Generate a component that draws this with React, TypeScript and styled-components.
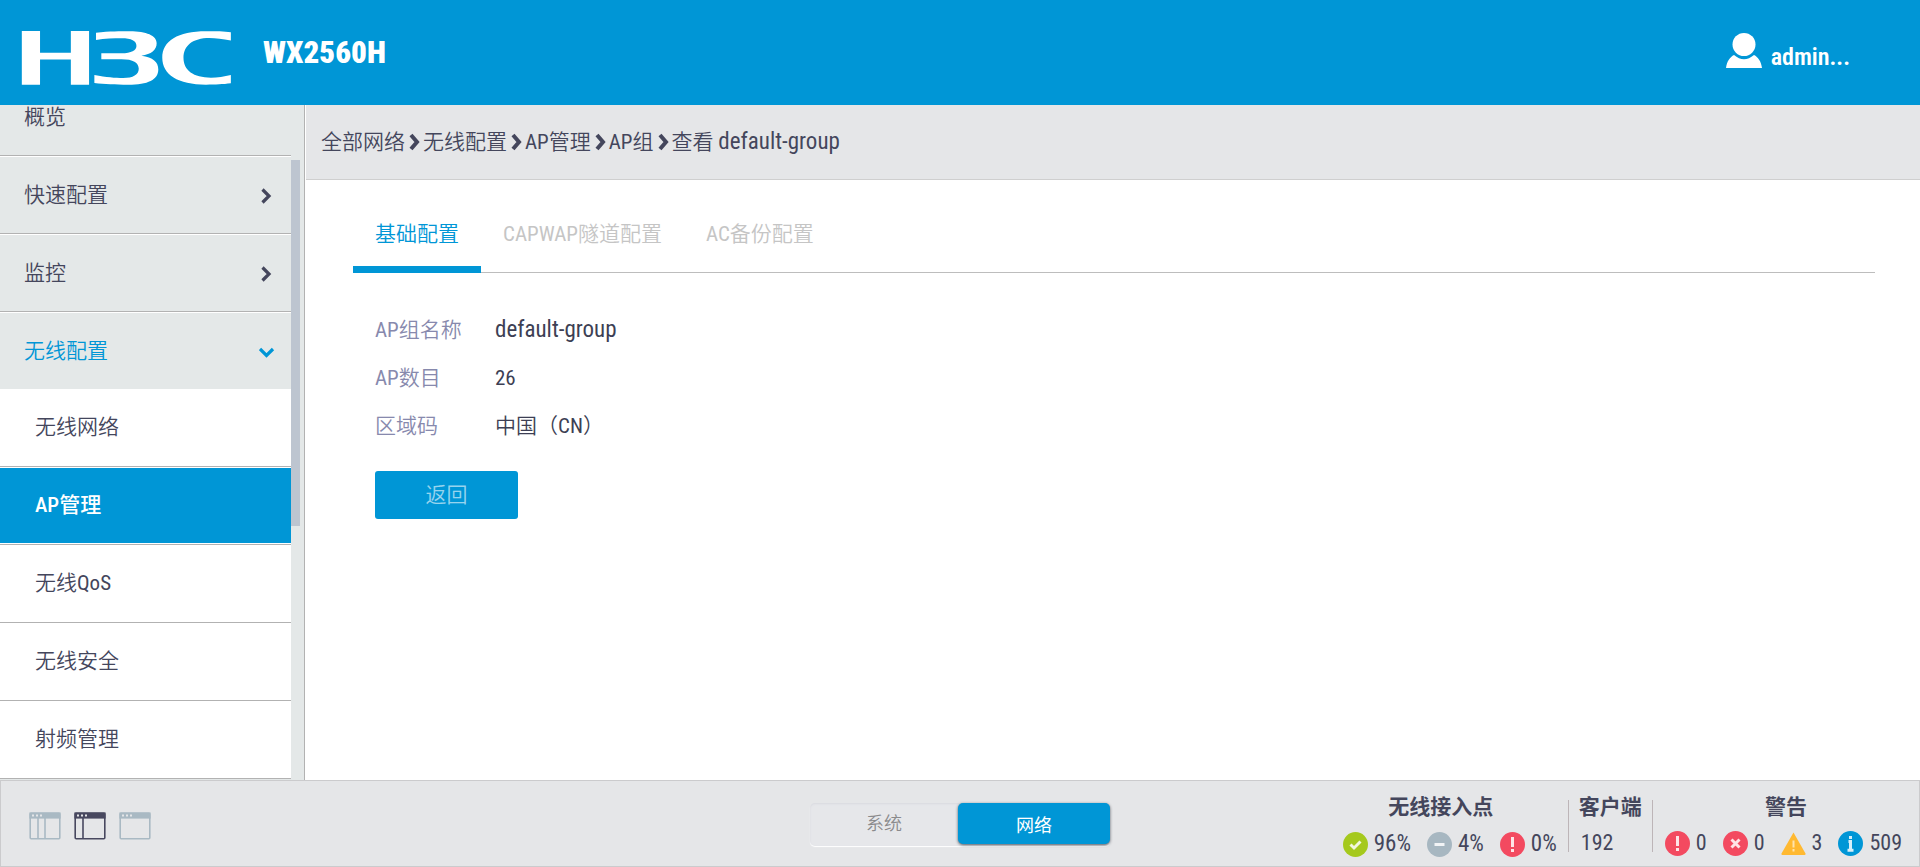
import React from "react";
import styled, { createGlobalStyle, css } from "styled-components";

const blue = "#0096d6";
const ink = "#44465c";
const line = "#b2b2b2";

const GlobalStyle = createGlobalStyle`
  *, *::before, *::after { box-sizing: border-box; }
  body {
    margin: 0;
    color: ${ink};
    background: #fff;
    font-family: "Roboto Condensed", "Noto Sans CJK SC DemiLight", "Noto Sans CJK SC", sans-serif;
    font-size: 21px;
    line-height: 30px;
  }
  button { font: inherit; color: inherit; border: 0; padding: 0; background: none; cursor: pointer; }
  a { color: inherit; text-decoration: none; }
  ul, ol, dl, dd { margin: 0; padding: 0; list-style: none; }
  svg { display: block; flex: none; }
`;

const Page = styled.div`
  display: flex;
  flex-direction: column;
  height: 100vh;
`;

const Header = styled.header`
  display: flex;
  flex: none;
  align-items: center;
  height: 105px;
  padding: 0 70px 0 21px;
  background: ${blue};
  color: #fff;
`;

const LogoLink = styled.a`
  padding-top: 11px;
`;

const DeviceName = styled.span`
  flex: 1;
  margin-left: 31px;
  font-size: 31px;
  font-weight: 900;
`;

const UserButton = styled.button`
  display: flex;
  align-items: flex-end;
  gap: 9px;
  && { font-size: 24px; font-weight: 600; }
  svg { margin-bottom: 4px; }
`;

const Body = styled.div`
  display: flex;
  flex: 1;
  min-height: 0;
`;

const Sidebar = styled.nav`
  display: flex;
  flex: none;
  width: 305px;
  overflow: hidden;
  background: #e4e8e8;
  border-right: 1px solid ${line};
`;

const Menu = styled.ul`
  flex: 1;
  margin-top: -27px;
`;

const MenuLink = styled.a<{ $open?: boolean }>`
  display: flex;
  align-items: center;
  justify-content: space-between;
  height: 78px;
  padding: 0 16px 0 24px;
  border-top: 1px solid #fff;
  border-bottom: 1px solid ${line};
  ${(p) => p.$open && css`
    height: 77px;
    color: ${blue};
    border-bottom: 0;
  `}
`;

const SubLink = styled.a<{ $current?: boolean }>`
  display: flex;
  align-items: center;
  height: 78px;
  padding: 0 0 2px 35px;
  background: #fff;
  border-bottom: 1px solid ${line};
  ${(p) => p.$current && css`
    color: #fff;
    font-family: "Roboto Condensed", "Noto Sans CJK SC", sans-serif;
    font-weight: 500;
    background: ${blue};
    background-clip: padding-box;
    box-shadow: inset 0 1px #fff, inset 0 -1px #fff;
  `}
`;

const ScrollTrack = styled.div`
  flex: none;
  width: 13px;
`;

const ScrollThumb = styled.div`
  width: 9px;
  height: 366px;
  margin-top: 55px;
  background: #bdc5d0;
`;

const Main = styled.main`
  flex: 1;
  min-width: 0;
  padding-left: 1px;
`;

const Breadcrumb = styled.ol`
  display: flex;
  align-items: center;
  height: 75px;
  padding: 0 15px;
  background: #e5e6e8;
  border-bottom: 1px solid #cfcfcf;
`;

const Crumb = styled.li`
  display: flex;
  align-items: center;
  white-space: pre;
  svg { margin: 0 3px 0 4px; }
`;

const GroupName = styled.span`
  font-size: 23px;
`;

const Content = styled.section`
  padding: 17px 45px 0 47px;
`;

const TabList = styled.div`
  display: flex;
  height: 76px;
  border-bottom: 1px solid #bdbdbd;
`;

const Tab = styled.button<{ $active?: boolean }>`
  height: 76px;
  && { padding: 4px 22px 0; color: ${(p) => (p.$active ? blue : "#c5c5c5")}; }
  border-bottom: 7px solid ${(p) => (p.$active ? blue : "transparent")};
`;

const Details = styled.dl`
  display: grid;
  grid-template-columns: 120px 1fr;
  grid-auto-rows: 48px;
  align-items: center;
  padding: 33px 22px 0;
`;

const Label = styled.dt`
  color: #8789ad;
`;

const Value = styled.dd`
  color: #3d3f54;
`;

const BackButton = styled.button`
  width: 143px;
  height: 48px;
  margin: 21px 22px 0;
  && { color: rgba(255, 255, 255, 0.6); background: ${blue}; }
  border-radius: 3px;
`;

const Footer = styled.footer`
  display: grid;
  flex: none;
  grid-template-columns: 1fr 300px 1fr;
  height: 87px;
  background: #e5e6e8;
  border: 1px solid #cbcbcd;
`;

const LayoutPicker = styled.div`
  display: flex;
  align-items: center;
  gap: 13px;
  padding: 5px 0 0 28px;
`;

const ModeSwitch = styled.div`
  display: flex;
  align-self: start;
  height: 43px;
  margin-top: 22px;
  border-radius: 5px;
  background: #e6e7ea;
  box-shadow: inset 0 1px 2px #d8d9df, 0 1px 1px #fff;
`;

const Mode = styled.button<{ $active?: boolean }>`
  flex: 1;
  height: 41px;
  && { font-size: 18px; color: #8a8a8c; }
  ${(p) => p.$active && css`
    flex: none;
    width: 152px;
    && {
      color: #fff;
      background: ${blue};
      font-family: "Noto Sans CJK SC", sans-serif;
    }
    border-radius: 5px;
    box-shadow: 0 1px 3px rgba(40, 50, 60, 0.8);
  `}
`;

const Stats = styled.div`
  display: flex;
  justify-content: flex-end;
`;

const Stat = styled.section<{ $wide?: boolean }>`
  min-width: ${(p) => (p.$wide ? "254px" : "0")};
  padding-top: 8px;
`;

const StatTitle = styled.h2`
  margin: 0;
  padding: 0 10px;
  font-family: "Noto Sans CJK SC", sans-serif;
  font-size: 21px;
  font-weight: 700;
  line-height: 32px;
  text-align: center;
`;

const StatItems = styled.ul<{ $end?: boolean }>`
  display: flex;
  justify-content: ${(p) => (p.$end ? "flex-end" : "flex-start")};
  gap: 16px;
  padding: ${(p) => (p.$end ? "7px 11px 0" : "6px 17px 0 12px")};
  font-size: ${(p) => (p.$end ? "23px" : "22px")};
`;

const StatItem = styled.li`
  display: flex;
  align-items: center;
  gap: 6px;
  line-height: 32px;
`;

const Divider = styled.div`
  width: 1px;
  height: 52px;
  margin-top: 19px;
  background: #bdb5b8;
`;

function Chevron({ down }: { down?: boolean }) {
  return (
    <svg width="16" height="18" viewBox="0 0 16 18" fill="none" stroke="currentColor" strokeWidth="3.2" aria-hidden="true">
      <path d={down ? "M1 7l6.500 6.500L14 7" : "M3.500 3.500l6.500 6.500-6.500 6.500"} />
    </svg>
  );
}

function CrumbArrow() {
  return (
    <svg width="11" height="18" viewBox="0 0 11 18" fill="none" stroke="currentColor" strokeWidth="4" aria-hidden="true">
      <path d="M2 2l6 7-6 7" />
    </svg>
  );
}

function Logo() {
  return (
    <svg width="211" height="54" viewBox="4 18 632 163" fill="#fff" role="img" aria-label="H3C">
      <path d="M4 18h55v66h93V18h55v162h-55v-76H59v76H4z" />
      <path d="M228 23C270 19 300 19 330 19C380 19 411 32 411 55C411 75 395 88 365 93C400 98 416 112 416 134C416 165 385 180 325 180C285 180 255 179 223 175V151C260 158 285 160 310 160C340 160 357 150 357 132C357 113 340 103 305 103H244V85H305C335 85 350 76 350 63C350 48 335 40 305 40C280 40 255 41 228 45Z" />
      <path d="M635 22V47C610 42 590 39 570 39C520 39 492 62 492 99C492 137 522 159 575 159C595 159 615 156 635 151V176C610 179 590 180 560 180C475 180 428 150 428 99C428 48 475 19 560 19C590 19 615 19 635 22Z" />
    </svg>
  );
}

function UserIcon() {
  return (
    <svg width="36" height="35" viewBox="0 0 36 35" fill="#fff" aria-hidden="true">
      <circle cx="18" cy="11.5" r="11.5" />
      <path d="M0 35C1 28 4 24 8 22Q18 30.500 28 22C32 24 35 28 36 35z" />
    </svg>
  );
}

function LayoutIcon({ bars, color }: { bars: number[]; color: string }) {
  return (
    <svg width="32" height="28" viewBox="0 0 32 28" fill="none" stroke={color} strokeWidth="1.6" aria-hidden="true">
      <rect x="1.200" y="1.200" width="29.600" height="25.600" rx="1" />
      <rect x="1.200" y="1.200" width="29.600" height="4.600" fill={color} />
      {bars.map((x) => <path key={x} d={`M${x} 6v21`} />)}
      <path d="M3 3.500h2M7 3.500h2M11 3.500h2" stroke="#e5e6e8" strokeWidth="2" />
    </svg>
  );
}

type Status = "ok" | "off" | "alert" | "error" | "warning" | "info";

const statusColor: Record<Status, string> = {
  ok: "#a5c91d", off: "#a7b7c1", alert: "#f34a60", error: "#f34a60", warning: "#ffb931", info: blue,
};

const statusMark: Record<Status, string> = {
  ok: "M7.500 12.500l3.500 3.500 6.500-6.500",
  off: "M7.500 12.500h10",
  alert: "M12.500 5v10M12.500 17v3",
  error: "M8.500 8.500l8 8M16.500 8.500l-8 8",
  warning: "M12.500 9.500v7M12.500 18v2.500",
  info: "M12.500 5v3M10.500 10.500h2V19M9.500 19.200h6",
};

function StatusIcon({ kind }: { kind: Status }) {
  return (
    <svg width="25" height="25" viewBox="0 0 25 25" aria-hidden="true">
      {kind === "warning"
        ? <path d="M12.500 1.500L24.500 22.500a1 1 0 0 1-1 1.500H1.500a1 1 0 0 1-1-1.500z" fill={statusColor[kind]} />
        : <circle cx="12.500" cy="12.500" r="12.500" fill={statusColor[kind]} />}
      <path
        d={statusMark[kind]}
        fill="none"
        stroke="#fff"
        strokeOpacity={kind === "warning" ? 0.6 : 0.85}
        strokeWidth={kind === "warning" ? 2 : 3}
      />
    </svg>
  );
}

const subItems = ["无线网络", "AP管理", "无线QoS", "无线安全", "射频管理"];
const crumbs = ["全部网络", "无线配置", "AP管理", "AP组"];
const apStats: [Status, string][] = [["ok", "96%"], ["off", "4%"], ["alert", "0%"]];
const alertStats: [Status, string][] = [["alert", "0"], ["error", "0"], ["warning", "3"], ["info", "509"]];

export default function App() {
  return (
    <Page>
      <GlobalStyle />
      <Header>
        <LogoLink href="#home"><Logo /></LogoLink>
        <DeviceName>WX2560H</DeviceName>
        <UserButton><UserIcon />admin...</UserButton>
      </Header>
      <Body>
        <Sidebar>
          <Menu>
            <li><MenuLink href="#overview">概览</MenuLink></li>
            <li><MenuLink href="#quick">快速配置<Chevron /></MenuLink></li>
            <li><MenuLink href="#monitor">监控<Chevron /></MenuLink></li>
            <li>
              <MenuLink href="#wireless" $open>无线配置<Chevron down /></MenuLink>
              <ul>
                {subItems.map((name) => (
                  <li key={name}><SubLink href={`#${name}`} $current={name === "AP管理"}>{name}</SubLink></li>
                ))}
              </ul>
            </li>
          </Menu>
          <ScrollTrack><ScrollThumb /></ScrollTrack>
        </Sidebar>
        <Main>
          <Breadcrumb>
            {crumbs.map((name) => <Crumb key={name}><a href={`#${name}`}>{name}</a><CrumbArrow /></Crumb>)}
            <Crumb>查看 <GroupName>default-group</GroupName></Crumb>
          </Breadcrumb>
          <Content>
            <TabList role="tablist">
              <Tab role="tab" aria-selected="true" $active>基础配置</Tab>
              <Tab role="tab">CAPWAP隧道配置</Tab>
              <Tab role="tab">AC备份配置</Tab>
            </TabList>
            <Details>
              <Label>AP组名称</Label>
              <Value><GroupName>default-group</GroupName></Value>
              <Label>AP数目</Label>
              <Value>26</Value>
              <Label>区域码</Label>
              <Value>中国（CN）</Value>
            </Details>
            <BackButton>返回</BackButton>
          </Content>
        </Main>
      </Body>
      <Footer>
        <LayoutPicker>
          <button aria-label="三栏布局"><LayoutIcon bars={[9, 16]} color="#a9b9c3" /></button>
          <button aria-label="两栏布局"><LayoutIcon bars={[9]} color="#48485f" /></button>
          <button aria-label="单栏布局"><LayoutIcon bars={[]} color="#a9b9c3" /></button>
        </LayoutPicker>
        <ModeSwitch>
          <Mode>系统</Mode>
          <Mode $active>网络</Mode>
        </ModeSwitch>
        <Stats>
          <Stat $wide>
            <StatTitle>无线接入点</StatTitle>
            <StatItems $end>
              {apStats.map(([kind, text]) => <StatItem key={kind}><StatusIcon kind={kind} />{text}</StatItem>)}
            </StatItems>
          </Stat>
          <Divider />
          <Stat>
            <StatTitle>客户端</StatTitle>
            <StatItems><StatItem>192</StatItem></StatItems>
          </Stat>
          <Divider />
          <Stat>
            <StatTitle>警告</StatTitle>
            <StatItems>
              {alertStats.map(([kind, text]) => <StatItem key={kind}><StatusIcon kind={kind} />{text}</StatItem>)}
            </StatItems>
          </Stat>
        </Stats>
      </Footer>
    </Page>
  );
}
